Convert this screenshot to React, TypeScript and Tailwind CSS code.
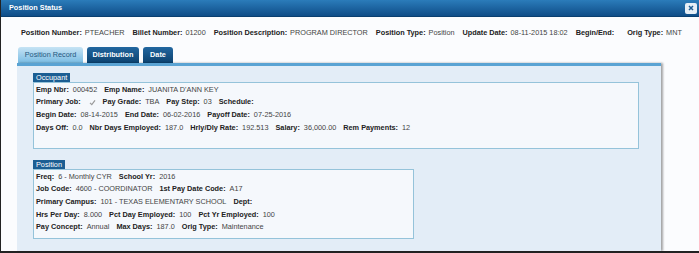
import React from "react";

const F = ({ l, v, m = 4, children }: { l: string; v?: string; m?: number; children?: React.ReactNode }) => (
  <span className="inline-flex items-center whitespace-nowrap">
    <span className="font-bold text-[#222]">{l}</span>
    <span className={m === 3 ? "ml-[3px] text-[#444]" : "ml-[4px] text-[#444]"}>{v}</span>
    {children}
  </span>
);

const Row = ({ children }: { children: React.ReactNode }) => (
  <div className="flex items-center gap-[7px] h-[12.6px]">{children}</div>
);

function Check() {
  return (
    <span className="ml-[4px] inline-flex w-[7px] h-[7px] items-center justify-center">
      <svg width="7" height="7" viewBox="0 0 7 7">
        <path d="M1 3.8 L2.8 5.6 L6 1.4" fill="none" stroke="#9a9a9a" strokeWidth="1.2" />
      </svg>
    </span>
  );
}

function Legend({ text }: { text: string }) {
  return (
    <div className="flex">
      <div className="h-[9px] px-[3px] bg-[#1b5e93] text-white leading-[9px] text-[7.3px]">{text}</div>
    </div>
  );
}

export default function App() {
  return (
    <div
      className="w-[699px] h-[253px] overflow-hidden bg-[#fbfcfe] border-l border-b-2 border-[#222] flex flex-col text-[7.3px]"
      style={{ fontFamily: '"Liberation Sans", Arial, sans-serif' }}
    >
      <div className="h-[17px] shrink-0 flex items-center justify-between pl-[8px] pr-[2px] bg-gradient-to-b from-[#2b7cba] to-[#0f4d88] border-b border-[#0a3f70]">
        <span className="font-bold text-white text-[7.3px]">Position Status</span>
        <span className="w-[12px] h-[11px] rounded-[2px] bg-[#e6eef6] flex items-center justify-center">
          <svg width="6" height="6" viewBox="0 0 6 6">
            <path d="M1 1 L5 5 M5 1 L1 5" stroke="#1d5d95" strokeWidth="1.5" />
          </svg>
        </span>
      </div>

      <div className="mt-[10px] pl-[20px] flex items-center gap-[8px] h-[12px] whitespace-nowrap">
        <F m={3} l="Position Number:" v="PTEACHER" />
        <F m={3} l="Billet Number:" v="01200" />
        <F m={3} l="Position Description:" v="PROGRAM DIRECTOR" />
        <F m={3} l="Position Type:" v="Position" />
        <F m={3} l="Update Date:" v="08-11-2015 18:02" />
        <F m={3} l="Begin/End:" v="" />
        <span className="ml-[2px] inline-flex">
          <F m={3} l="Orig Type:" v="MNT" />
        </span>
      </div>

      <div className="mt-[8px] pl-[17px] flex gap-[4px] h-[16px] items-end">
        <div className="w-[65px] h-[16px] rounded-t-[3px] bg-gradient-to-b from-[#c6e3f4] to-[#79bce3] text-[#25587f] flex items-center justify-center">
          Position Record
        </div>
        <div className="w-[52px] h-[16px] rounded-t-[3px] bg-gradient-to-b from-[#2267a0] to-[#0c426f] text-white font-bold flex items-center justify-center">
          Distribution
        </div>
        <div className="w-[30px] h-[16px] rounded-t-[3px] bg-gradient-to-b from-[#2267a0] to-[#0c426f] text-white font-bold flex items-center justify-center">
          Date
        </div>
      </div>

      <div className="ml-[16px] w-[644px] flex-1 bg-[#e3edf7] border-t-[3px] border-[#5aa3d3] shadow-[2px_0_2px_rgba(0,0,0,0.35)] pl-[16px] pt-[7px]">
        <Legend text="Occupant" />
        <div className="w-[606px] h-[67px] border border-[#95c3da] bg-[#f5f8fc] pl-[2px] pt-[1px]">
          <Row>
            <F l="Emp Nbr:" v="000452" />
            <F l="Emp Name:" v="JUANITA D'ANN KEY" />
          </Row>
          <Row>
            <F l="Primary Job:">
              <Check />
            </F>
            <F l="Pay Grade:" v="TBA" />
            <F l="Pay Step:" v="03" />
            <F l="Schedule:" v="" />
          </Row>
          <Row>
            <F l="Begin Date:" v="08-14-2015" />
            <F l="End Date:" v="06-02-2016" />
            <F l="Payoff Date:" v="07-25-2016" />
          </Row>
          <Row>
            <F l="Days Off:" v="0.0" />
            <F l="Nbr Days Employed:" v="187.0" />
            <F l="Hrly/Dly Rate:" v="192.513" />
            <F l="Salary:" v="36,000.00" />
            <F l="Rem Payments:" v="12" />
          </Row>
        </div>

        <div className="mt-[11px]">
          <Legend text="Position" />
        </div>
        <div className="w-[381px] h-[70px] border border-[#95c3da] bg-[#f5f8fc] pl-[2px] pt-[1px]">
          <Row>
            <F l="Freq:" v="6 - Monthly CYR" />
            <F l="School Yr:" v="2016" />
          </Row>
          <Row>
            <F l="Job Code:" v="4600 - COORDINATOR" />
            <F l="1st Pay Date Code:" v="A17" />
          </Row>
          <Row>
            <F l="Primary Campus:" v="101 - TEXAS ELEMENTARY SCHOOL" />
            <F l="Dept:" v="" />
          </Row>
          <Row>
            <F l="Hrs Per Day:" v="8.000" />
            <F l="Pct Day Employed:" v="100" />
            <F l="Pct Yr Employed:" v="100" />
          </Row>
          <Row>
            <F l="Pay Concept:" v="Annual" />
            <F l="Max Days:" v="187.0" />
            <F l="Orig Type:" v="Maintenance" />
          </Row>
        </div>
      </div>
    </div>
  );
}
